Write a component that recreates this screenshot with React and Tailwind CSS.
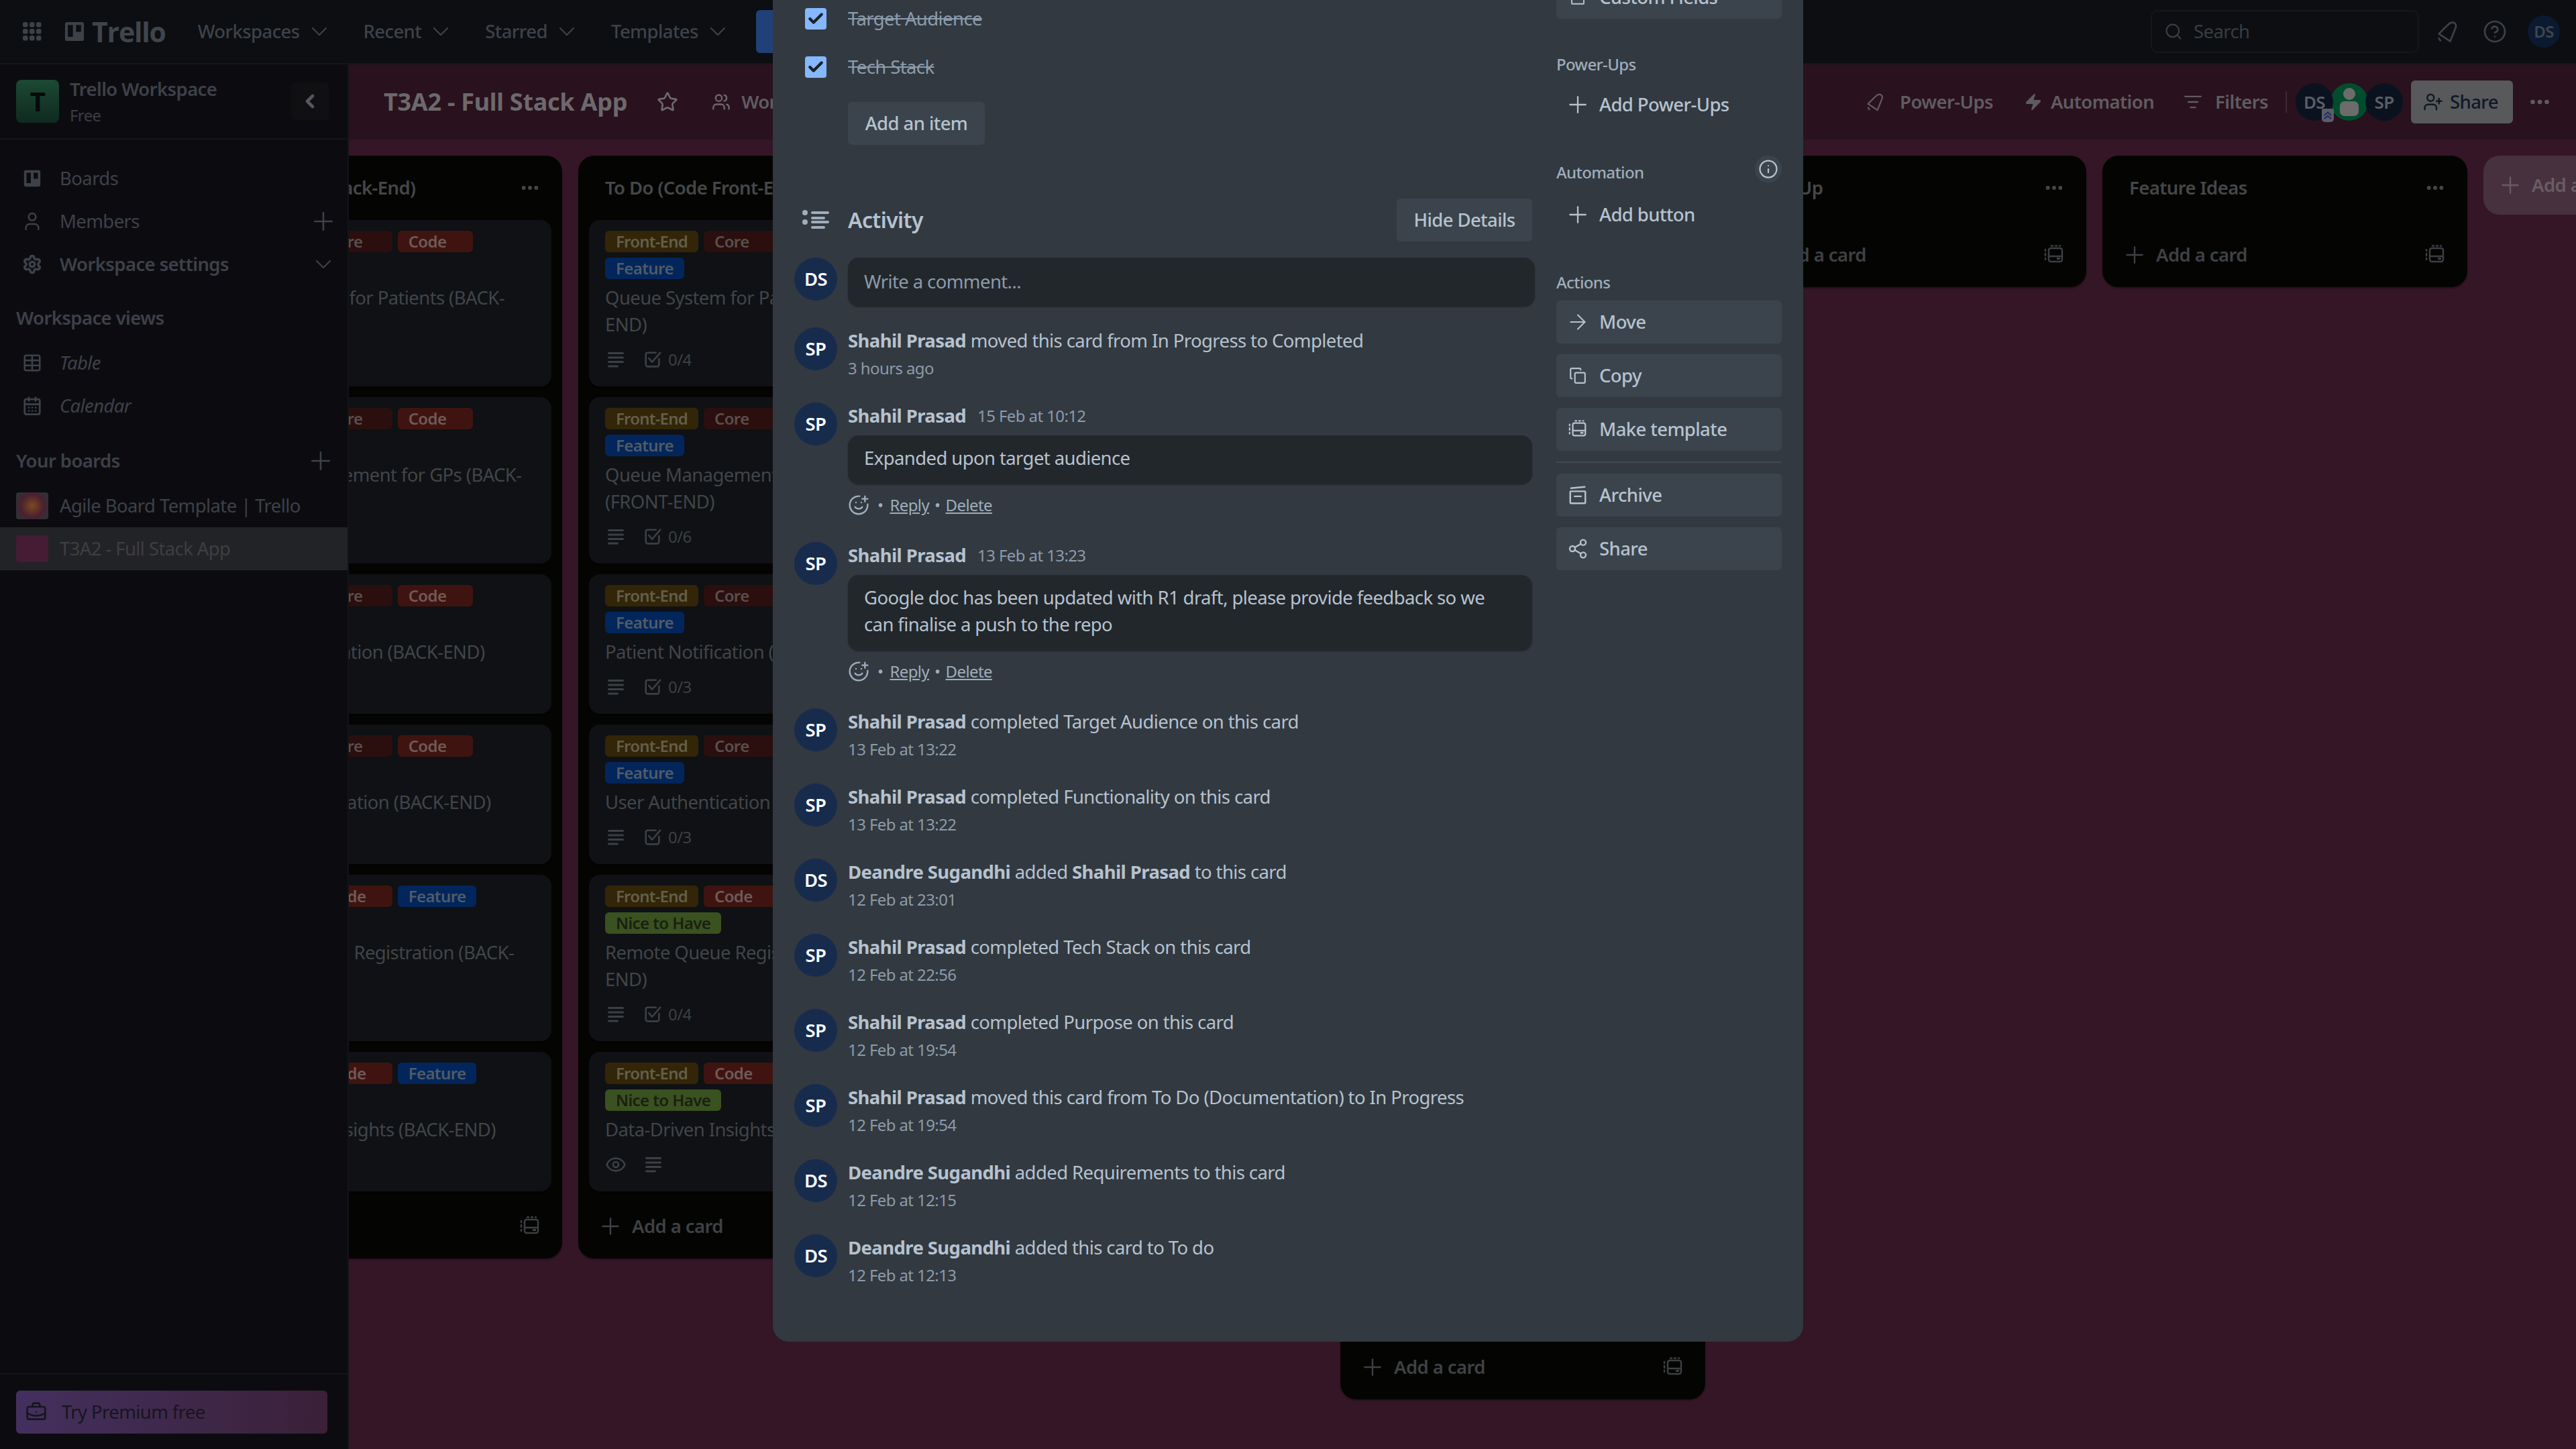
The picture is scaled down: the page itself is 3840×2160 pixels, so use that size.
import {
  ArrowRight, BriefcaseBusiness, CalendarDays, Check, ChevronDown, ChevronLeft, CircleHelp, Copy, Ellipsis, Eye,
  Info, ListFilter, Plus, Search, Settings, Share2, SmilePlus, Star, Table, User, UserPlus, Users, Zap,
} from "lucide-react";

const font = "font-['Noto_Sans','Open_Sans',sans-serif] tracking-[-0.6px]";

function AppsIcon({ className }) {
  return (
    <svg viewBox="0 0 32 32" className={className} fill="currentColor">
      {[2, 12, 22].map((y) =>
        [2, 12, 22].map((x) => <rect key={`${x}-${y}`} x={x} y={y} width="7.5" height="7.5" rx="2.5" />)
      )}
    </svg>
  );
}

// the board mark, used for the logo and the Boards row
function BoardMark({ className }) {
  return (
    <svg viewBox="0 0 32 32" className={className} fill="currentColor">
      <path
        fillRule="evenodd"
        d="M4 1h24a3 3 0 0 1 3 3v24a3 3 0 0 1-3 3H4a3 3 0 0 1-3-3V4a3 3 0 0 1 3-3Zm1.500 4.500v19h8v-19h-8Zm13 0v11h8v-11h-8Z"
      />
    </svg>
  );
}

function RocketIcon({ className }) {
  return (
    <svg viewBox="0 0 32 32" className={className} fill="none" stroke="currentColor" strokeWidth="2.4" strokeLinejoin="round" strokeLinecap="round">
      <path d="M24 4c3 1 4 3 3.500 6L20 29 5 19l10-10c3-3 6-6 9-5Z" />
      <path d="M5 25l2 3" />
    </svg>
  );
}

function DescIcon({ className }) {
  return (
    <svg viewBox="0 0 32 32" className={className} fill="currentColor">
      <rect x="4" y="5" width="24" height="3" rx="1.5" />
      <rect x="4" y="11.5" width="24" height="3" rx="1.5" />
      <rect x="4" y="18" width="24" height="3" rx="1.5" />
      <rect x="4" y="24.5" width="16" height="3" rx="1.5" />
    </svg>
  );
}

function ChecklistIcon({ className }) {
  return (
    <svg viewBox="0 0 32 32" className={className} fill="none" stroke="currentColor" strokeWidth="2.8" strokeLinecap="round" strokeLinejoin="round">
      <path d="M26 15v9a3 3 0 0 1-3 3H8a3 3 0 0 1-3-3V8a3 3 0 0 1 3-3h13" />
      <path d="M10 14l5 6L28 5" />
    </svg>
  );
}

function TemplateIcon({ className }) {
  return (
    <svg viewBox="0 0 32 32" className={className} fill="none" stroke="currentColor" strokeWidth="2.4" strokeLinecap="round">
      <rect x="8" y="6" width="20" height="20" rx="3" />
      <path d="M8 18h20" />
      <path d="M3 8v2M3 14v3M3 21v2M12 2.500h2M18 2.500h2M24 2.500h1" />
      <rect x="20" y="20" width="5" height="3" fill="currentColor" stroke="none" />
    </svg>
  );
}

function ArchiveIcon({ className }) {
  return (
    <svg viewBox="0 0 32 32" className={className} fill="none" stroke="currentColor" strokeWidth="2.6" strokeLinecap="round">
      <path d="M5 5l22-2" />
      <rect x="4" y="10" width="24" height="19" rx="1" />
      <path d="M11 18h10" />
    </svg>
  );
}

function ActivityIcon({ className }) {
  return (
    <svg viewBox="0 0 40 32" className={className} fill="currentColor">
      <circle cx="4" cy="5" r="4" />
      <circle cx="4" cy="19" r="4" />
      <rect x="13" y="3" width="27" height="4" rx="2" />
      <rect x="13" y="11" width="21" height="4" rx="2" />
      <rect x="13" y="17" width="27" height="4" rx="2" />
      <rect x="13" y="25" width="21" height="4" rx="2" />
    </svg>
  );
}

const navItems = [
  { label: "Workspaces", ml: "ml-[48px]" },
  { label: "Recent", ml: "ml-[50px]" },
  { label: "Starred", ml: "ml-[50px]" },
  { label: "Templates", ml: "ml-[50px]" },
];

function TopNav() {
  return (
    <header className="h-[96px] shrink-0 flex items-center bg-[#0c0e11] border-b-2 border-[#15161a] text-[#3d4249] pl-[32px] pr-[24px]">
      <AppsIcon className="w-[32px] h-[32px]" />
      <BoardMark className="w-[30px] h-[30px] ml-[32px]" />
      <span className="ml-[11px] text-[41px] leading-none font-bold font-['Open_Sans',sans-serif] tracking-[-0.03em] text-[#40454c]">Trello</span>
      {navItems.map((item) => (
        <div key={item.label} className={`flex items-center ${item.ml}`}>
          <span className="text-[27.5px] font-medium leading-[40px]">{item.label}</span>
          <ChevronDown className="w-[40px] h-[40px] ml-[9px] -mr-[4px]" strokeWidth={1.3} />
        </div>
      ))}
      <div className="ml-[41px] w-[140px] h-[64px] rounded-[6px] bg-[#1f4177]" />
      <div className="ml-auto w-[400px] h-[64px] rounded-[10px] border-2 border-[#15171a] flex items-center pl-[18px] gap-[16px] text-[#383d44]">
        <Search className="w-[28px] h-[28px]" strokeWidth={2} />
        <span className="text-[27.5px] leading-[40px]">Search</span>
      </div>
      <RocketIcon className="w-[36px] h-[36px] ml-[24px]" />
      <CircleHelp className="w-[36px] h-[36px] ml-[35px]" strokeWidth={1.8} />
      <div className="ml-[31px] w-[48px] h-[48px] rounded-full bg-[#0b1a30] flex items-center justify-center text-[24px] font-semibold text-[#3f4650]">DS</div>
    </header>
  );
}

function SideRow({ icon, label, right, italic, semibold }) {
  return (
    <div className="h-[64px] flex items-center pl-[32px] pr-[20px]">
      <div className="w-[32px] h-[32px] flex items-center justify-center">{icon}</div>
      <span className={`ml-[25px] text-[27.5px] leading-[40px] ${italic ? "italic" : ""} ${semibold ? "font-semibold" : ""}`}>{label}</span>
      <div className="ml-auto">{right}</div>
    </div>
  );
}

function Sidebar() {
  return (
    <aside className="w-[520px] shrink-0 z-10 flex flex-col bg-[#0c0c10] border-r-2 border-[#131418] text-[#3d4148]">
      <div className="h-[112px] shrink-0 flex items-center pl-[24px] pr-[28px] border-b-2 border-[#141518]">
        <div className="w-[64px] h-[64px] rounded-[8px] bg-gradient-to-b from-[#1c4a33] to-[#0f2a20] flex items-center justify-center text-[#06090a] text-[40px] font-bold">T</div>
        <div className="ml-[16px] flex flex-col">
          <span className="text-[27.5px] font-semibold leading-[40px] -mt-[2px]">Trello Workspace</span>
          <span className="text-[24px] leading-[32px] mt-[3px] text-[#3a3d44]">Free</span>
        </div>
        <div className="ml-auto w-[56px] h-[56px] rounded-[6px] bg-[#101013] flex items-center justify-center text-[#57585c]">
          <ChevronLeft className="w-[32px] h-[32px]" strokeWidth={3.5} />
        </div>
      </div>
      <div className="pt-[26px]">
        <SideRow icon={<BoardMark className="w-[26px] h-[26px]" />} label="Boards" />
        <SideRow icon={<User className="w-[32px] h-[32px]" strokeWidth={1.8} />} label="Members" right={<Plus className="w-[44px] h-[44px] -mr-[6px]" strokeWidth={1.4} />} />
        <SideRow icon={<Settings className="w-[30px] h-[30px]" strokeWidth={2.8} />} label="Workspace settings" semibold right={<ChevronDown className="w-[40px] h-[40px] -mr-[4px]" strokeWidth={1.3} />} />
      </div>
      <div className="h-[40px] mt-[28px] flex items-center pl-[24px] text-[27.5px] font-semibold">Workspace views</div>
      <div className="mt-[15px]">
        <SideRow icon={<Table className="w-[30px] h-[30px]" strokeWidth={2} />} label="Table" italic />
        <SideRow icon={<CalendarDays className="w-[30px] h-[30px]" strokeWidth={2.2} />} label="Calendar" italic />
      </div>
      <div className="h-[40px] mt-[30px] flex items-center justify-between pl-[24px] pr-[18px] text-[27.5px] font-semibold">
        Your boards
        <Plus className="w-[44px] h-[44px]" strokeWidth={1.4} />
      </div>
      <div className="mt-[15px] h-[64px] flex items-center pl-[24px]">
        <div className="w-[48px] h-[40px] rounded-[4px] bg-[radial-gradient(circle_at_50%_50%,#7a4a20,#4a2030_55%,#233a3a)]" />
        <span className="ml-[17px] text-[27.5px] leading-[40px]">Agile Board Template | Trello</span>
      </div>
      <div className="h-[64px] flex items-center pl-[24px] bg-[#222326] text-[#3f3e43]">
        <div className="w-[48px] h-[40px] rounded-[4px] bg-[#451c33]" />
        <span className="ml-[17px] text-[27.5px] leading-[40px]">T3A2 - Full Stack App</span>
      </div>
      <div className="mt-auto h-[113px] border-t-2 border-[#141518] flex items-start pt-[24px] pl-[24px] pr-[30px]">
        <div className="w-full h-[64px] rounded-[6px] bg-gradient-to-r from-[#44305f] to-[#3a2038] flex items-center pl-[14px] text-[#16151d]">
          <BriefcaseBusiness className="w-[32px] h-[32px]" strokeWidth={2} />
          <span className="ml-[22px] text-[27.5px] leading-[40px]">Try Premium free</span>
        </div>
      </div>
    </aside>
  );
}

function BoardHeader() {
  return (
    <div className="h-[112px] shrink-0 flex items-center bg-[#29111d] pl-[52px] pr-[36px] text-[#5f5c60]">
      <span className="text-[36px] leading-[48px] font-bold tracking-[-0.27px] text-[#6c696d]">T3A2 - Full Stack App</span>
      <Star className="w-[32px] h-[32px] ml-[44px] text-[#6c696d]" strokeWidth={2} />
      <Users className="w-[28px] h-[28px] ml-[50px] text-[#6c696d]" strokeWidth={2} />
      <span className="ml-[16px] text-[27.5px] font-semibold">Workspace visible</span>
      <div className="ml-auto flex items-center">
        <RocketIcon className="w-[30px] h-[30px]" />
        <span className="ml-[22px] text-[27.5px] font-semibold">Power-Ups</span>
        <Zap className="w-[28px] h-[28px] ml-[46px]" fill="currentColor" strokeWidth={1} />
        <span className="ml-[12px] text-[27.5px] font-semibold">Automation</span>
        <ListFilter className="w-[28px] h-[28px] ml-[44px]" strokeWidth={2} />
        <span className="ml-[19px] text-[27.5px] font-semibold">Filters</span>
        <div className="w-[2px] h-[32px] ml-[26px] bg-[#3f2a35]" />
        <div className="ml-[13px] flex items-center">
          <div className="relative w-[56px] h-[56px] rounded-full bg-[#0a1220] flex items-center justify-center text-[26px] font-semibold text-[#5c5e64]">
            DS
            <div className="absolute -right-[1px] -bottom-[2px] w-[18px] h-[20px] rounded-t-[2px] rounded-b-[5px] bg-[#5c5d66] flex items-center justify-center">
              <svg viewBox="0 0 16 18" className="w-[14px] h-[16px]" fill="none" stroke="#1d2a6b" strokeWidth="2.2">
                <path d="M2 9l6-5 6 5M2 15l6-5 6 5" />
              </svg>
            </div>
          </div>
          <div className="-ml-[4px] w-[56px] h-[56px] rounded-full bg-[#004d2e] flex flex-col items-center justify-center gap-[2px]">
            <div className="w-[18px] h-[18px] rounded-full bg-[#6c6c6c]" />
            <div className="w-[28px] h-[22px] rounded-[7px] bg-[#6c6c6c]" />
          </div>
          <div className="-ml-[4px] w-[56px] h-[56px] rounded-full bg-[#0a1220] flex items-center justify-center text-[26px] font-semibold text-[#5c5e64]">SP</div>
        </div>
        <div className="ml-[12px] w-[152px] h-[64px] rounded-[6px] bg-[#58595b] flex items-center pl-[18px] text-[#0f1829]">
          <UserPlus className="w-[30px] h-[30px]" strokeWidth={2} />
          <span className="ml-[10px] text-[27.5px] font-medium">Share</span>
        </div>
        <Ellipsis className="w-[36px] h-[36px] ml-[22px]" strokeWidth={2.4} />
      </div>
    </div>
  );
}

const labelStyles = {
  "Front-End": "bg-[#332507] text-[#625e4a] tracking-[-0.8px]",
  "Back-End": "bg-[#332507] text-[#625e4a] tracking-[-1.1px]",
  Core: "bg-[#2a0f0e] text-[#5a4e4d]",
  Code: "bg-[#3f1410] text-[#6f5a57]",
  Feature: "bg-[#02265c] text-[#515b66]",
  "Nice to Have": "bg-[#3a5120] text-[#1a2010]",
};

function Card({ labels, title, badges }) {
  return (
    <div className="w-[512px] rounded-[16px] bg-[#0f1114] px-[24px] pt-[16px] pb-[16px] shadow-[0_2px_2px_rgba(0,0,0,0.3)]">
      <div className="flex flex-wrap gap-[8px]">
        {labels.map((l) => (
          <span key={l} className={`h-[32px] min-w-[112px] rounded-[6px] px-[16px] text-[24px] leading-[32px] font-semibold ${labelStyles[l]}`}>{l}</span>
        ))}
      </div>
      <div className="mt-[8px] text-[27.5px] leading-[40px] text-[#414549]">{title}</div>
      <div className="mt-[8px] h-[48px] flex items-center text-[#3c4045]">
        {badges === "eye" ? (
          <>
            <Eye className="w-[32px] h-[32px]" strokeWidth={2} />
            <DescIcon className="w-[32px] h-[32px] ml-[24px]" />
          </>
        ) : (
          <>
            <DescIcon className="w-[32px] h-[32px]" />
            <ChecklistIcon className="w-[30px] h-[30px] ml-[24px]" />
            <span className="ml-[8px] text-[24px]">{badges}</span>
          </>
        )}
      </div>
    </div>
  );
}

function AddCard() {
  return (
    <div className="h-[64px] mt-[20px] mb-[16px] flex items-center pl-[32px] pr-[32px] text-[#3e4145]">
      <Plus className="w-[40px] h-[40px] -mx-[4px]" strokeWidth={1.4} />
      <span className="ml-[16px] text-[27.5px] font-semibold">Add a card</span>
      <TemplateIcon className="w-[32px] h-[32px] ml-auto text-[#3c3f44]" />
    </div>
  );
}

function List({ title, cards = [], className = "" }) {
  return (
    <div className={`w-[544px] shrink-0 flex flex-col rounded-[24px] bg-[#040502] shadow-[0_2px_2px_rgba(0,0,0,0.3)] ${className}`}>
      <div className="h-[96px] shrink-0 flex items-center pl-[40px] pr-[32px] text-[#45474a]">
        <span className="text-[27.5px] font-semibold">{title}</span>
        <Ellipsis className="w-[32px] h-[32px] ml-auto" strokeWidth={2.4} />
      </div>
      {cards.length > 0 && (
        <div className="flex flex-col items-center gap-[16px]">
          {cards.map((c) => <Card key={c.id} {...c} />)}
        </div>
      )}
      <div className="mt-auto">
        <AddCard />
      </div>
    </div>
  );
}

const backEnd = [
  { id: "b1", labels: ["Back-End", "Core", "Code", "Feature"], title: "Queue System for Patients (BACK-END)", badges: "0/4" },
  { id: "b2", labels: ["Back-End", "Core", "Code", "Feature"], title: "Queue Management for GPs (BACK-END)", badges: "0/6" },
  { id: "b3", labels: ["Back-End", "Core", "Code", "Feature"], title: "Patient Notification (BACK-END)", badges: "0/3" },
  { id: "b4", labels: ["Back-End", "Core", "Code", "Feature"], title: "User Authentication (BACK-END)", badges: "0/3" },
  { id: "b5", labels: ["Back-End", "Code", "Feature", "Nice to Have"], title: "Remote Queue Registration (BACK-END)", badges: "0/4" },
  { id: "b6", labels: ["Back-End", "Code", "Feature", "Nice to Have"], title: "Data-Driven Insights (BACK-END)", badges: "0/4" },
];

const frontEnd = [
  { id: "f1", labels: ["Front-End", "Core", "Code", "Feature"], title: "Queue System for Patients (FRONT-END)", badges: "0/4" },
  { id: "f2", labels: ["Front-End", "Core", "Code", "Feature"], title: <>Queue Management for GPs<br />(FRONT-END)</>, badges: "0/6" },
  { id: "f3", labels: ["Front-End", "Core", "Code", "Feature"], title: "Patient Notification (FE)", badges: "0/3" },
  { id: "f4", labels: ["Front-End", "Core", "Code", "Feature"], title: "User Authentication (FE)", badges: "0/3" },
  { id: "f5", labels: ["Front-End", "Code", "Feature", "Nice to Have"], title: <>Remote Queue Registration (FE-<br />END)</>, badges: "0/4" },
  { id: "f6", labels: ["Front-End", "Code", "Feature", "Nice to Have"], title: "Data-Driven Insights (FE)", badges: "eye" },
];

function Board() {
  return (
    <div className="flex-1 min-w-0 flex flex-col overflow-hidden bg-[#341626]">
      <BoardHeader />
      <div className="flex items-start gap-[24px] pt-[24px] -ml-[226px]">
        <List title="To Do (Code Back-End)" cards={backEnd} />
        <List title="To Do (Code Front-End)" cards={frontEnd} />
        <List title="In Progress" />
        <List title="Completed" className="h-[1854px]" />
        <List title="Wrap Up" />
        <List title="Feature Ideas" />
        <div className="w-[544px] h-[88px] shrink-0 rounded-[24px] bg-[#47313e] flex items-center pl-[24px] text-[#6a5c62]">
          <Plus className="w-[40px] h-[40px] -mx-[4px]" strokeWidth={1.4} />
          <span className="ml-[16px] text-[27.5px] font-semibold">Add another list</span>
        </div>
      </div>
    </div>
  );
}

function Avatar({ who }) {
  return (
    <div className="w-[64px] h-[64px] shrink-0 rounded-full bg-[#172b4d] flex items-center justify-center text-[27.5px] font-semibold text-white">{who}</div>
  );
}

function Entry({ who, name, time, children }) {
  return (
    <div className="h-[112px] flex gap-[16px]">
      <Avatar who={who} />
      <div>
        <div className="text-[27.5px] leading-[40px] text-[#b6c2cf]">
          <b className="font-bold">{name}</b> {children}
        </div>
        <div className="mt-[1px] text-[24px] leading-[40px] text-[#8c9bab]">{time}</div>
      </div>
    </div>
  );
}

function Comment({ time, height, children }) {
  return (
    <div className={`flex gap-[16px] ${height}`}>
      <Avatar who="SP" />
      <div>
        <div className="flex items-center leading-[40px]">
          <b className="text-[27.5px] font-bold text-[#b6c2cf]">Shahil Prasad</b>
          <span className="ml-[17px] text-[24px] text-[#8c9bab]">{time}</span>
        </div>
        <div className="mt-[9px] w-[1020px] rounded-[16px] bg-[#22272b] px-[24px] pt-[14px] pb-[18px] text-[27.5px] leading-[40px] text-[#b6c2cf] shadow-[0_2px_2px_rgba(0,0,0,0.3)]">{children}</div>
        <div className="mt-[12px] h-[40px] flex items-center text-[24px] text-[#9fadbc]">
          <SmilePlus className="w-[32px] h-[32px]" strokeWidth={1.8} />
          <span className="ml-[12px]">•</span>
          <span className="ml-[10px] underline">Reply</span>
          <span className="ml-[8px]">•</span>
          <span className="ml-[8px] underline">Delete</span>
        </div>
      </div>
    </div>
  );
}

function CheckRow({ label }) {
  return (
    <div className="h-[56px] mb-[16px] flex items-center pl-[16px]">
      <div className="w-[32px] h-[32px] rounded-[4px] bg-[#85b8ff] flex items-center justify-center text-[#1d2125]">
        <Check className="w-[26px] h-[26px]" strokeWidth={4} />
      </div>
      <span className="ml-[32px] text-[27.5px] leading-[40px] line-through text-[#8c9bab]">{label}</span>
    </div>
  );
}

function ActionButton({ icon, label, className = "" }) {
  return (
    <div className={`h-[64px] rounded-[6px] bg-[#3b444c] flex items-center pl-[20px] ${className}`}>
      <div className="w-[24px] h-[32px] flex items-center justify-center">{icon}</div>
      <span className="ml-[20px] text-[27.5px] font-medium leading-[40px]">{label}</span>
    </div>
  );
}

function AddRow({ label }) {
  return (
    <div className="h-[64px] flex items-center pl-[12px]">
      <Plus className="w-[40px] h-[40px]" strokeWidth={1.4} />
      <span className="ml-[12px] text-[27.5px] font-medium leading-[40px]">{label}</span>
    </div>
  );
}

function CardModal() {
  return (
    <div className="absolute left-[1152px] top-0 z-20 w-[1536px] h-[2000px] rounded-b-[24px] overflow-hidden bg-[#323940] flex">
      <div className="w-[1136px] shrink-0 pl-[32px]">
        <CheckRow label="Target Audience" />
        <CheckRow label="Tech Stack" />
        <div className="ml-[80px] mt-[24px] w-[204px] h-[64px] rounded-[6px] bg-[#3b444c] flex items-center justify-center text-[27.5px] font-medium text-[#b6c2cf]">Add an item</div>

        <div className="mt-[80px] h-[64px] flex items-center">
          <ActivityIcon className="w-[40px] h-[32px] ml-[12px] text-[#9fadbc]" />
          <span className="ml-[28px] text-[32px] font-semibold text-[#b6c2cf]">Activity</span>
          <div className="ml-auto mr-[4px] w-[202px] h-[64px] rounded-[6px] bg-[#3b444c] flex items-center justify-center text-[27.5px] font-medium text-[#b6c2cf]">Hide Details</div>
        </div>

        <div className="mt-[24px] h-[104px] flex gap-[16px]">
          <Avatar who="DS" />
          <div className="w-[1024px] h-[72px] rounded-[16px] bg-[#22272b] flex items-center px-[24px] text-[27.5px] text-[#8c9bab] shadow-[0_2px_2px_rgba(0,0,0,0.3)]">Write a comment...</div>
        </div>

        <Entry who="SP" name="Shahil Prasad" time="3 hours ago">moved this card from In Progress to Completed</Entry>
        <Comment time="15 Feb at 10:12" height="h-[208px]">Expanded upon target audience</Comment>
        <Comment time="13 Feb at 13:23" height="h-[248px]">
          Google doc has been updated with R1 draft, please provide feedback so we
          <br />
          can finalise a push to the repo
        </Comment>
        <Entry who="SP" name="Shahil Prasad" time="13 Feb at 13:22">completed Target Audience on this card</Entry>
        <Entry who="SP" name="Shahil Prasad" time="13 Feb at 13:22">completed Functionality on this card</Entry>
        <Entry who="DS" name="Deandre Sugandhi" time="12 Feb at 23:01">added <b className="font-bold">Shahil Prasad</b> to this card</Entry>
        <Entry who="SP" name="Shahil Prasad" time="12 Feb at 22:56">completed Tech Stack on this card</Entry>
        <Entry who="SP" name="Shahil Prasad" time="12 Feb at 19:54">completed Purpose on this card</Entry>
        <Entry who="SP" name="Shahil Prasad" time="12 Feb at 19:54">moved this card from To Do (Documentation) to In Progress</Entry>
        <Entry who="DS" name="Deandre Sugandhi" time="12 Feb at 12:15">added Requirements to this card</Entry>
        <Entry who="DS" name="Deandre Sugandhi" time="12 Feb at 12:13">added this card to To do</Entry>
      </div>

      <div className="ml-[32px] w-[336px] shrink-0 -mt-[36px] text-[#b6c2cf]">
        <ActionButton icon={<ArchiveIcon className="w-[28px] h-[28px]" />} label="Custom Fields" />
        <div className="mt-[48px] h-[40px] flex items-center text-[24px] font-medium text-[#9fadbc]">Power-Ups</div>
        <div className="mt-[8px]"><AddRow label="Add Power-Ups" /></div>
        <div className="mt-[49px] h-[40px] flex items-center justify-between text-[24px] font-medium text-[#9fadbc]">
          Automation
          <div className="w-[40px] h-[40px] -mt-[10px] rounded-full bg-[#3b444c] flex items-center justify-center text-[#b6c2cf]">
            <Info className="w-[30px] h-[30px]" strokeWidth={1.8} />
          </div>
        </div>
        <div className="mt-[11px]"><AddRow label="Add button" /></div>
        <div className="mt-[49px] h-[40px] flex items-center text-[24px] font-medium text-[#9fadbc]">Actions</div>
        <div className="mt-[7px] flex flex-col gap-[16px]">
          <ActionButton icon={<ArrowRight className="w-[36px] h-[36px] shrink-0" strokeWidth={1.4} />} label="Move" />
          <ActionButton icon={<Copy className="w-[26px] h-[26px] shrink-0" strokeWidth={2} />} label="Copy" />
          <ActionButton icon={<TemplateIcon className="w-[30px] h-[30px] shrink-0" />} label="Make template" />
          <div className="h-[2px] bg-[#414952]" />
          <ActionButton icon={<ArchiveIcon className="w-[30px] h-[30px] shrink-0" />} label="Archive" />
          <ActionButton icon={<Share2 className="w-[32px] h-[32px] shrink-0" strokeWidth={1.8} />} label="Share" />
        </div>
      </div>
    </div>
  );
}

export default function App() {
  return (
    <div className={`relative w-[3840px] h-[2160px] overflow-hidden flex flex-col bg-[#341626] ${font}`}>
      <TopNav />
      <div className="flex-1 min-h-0 flex">
        <Sidebar />
        <Board />
      </div>
      <CardModal />
    </div>
  );
}
